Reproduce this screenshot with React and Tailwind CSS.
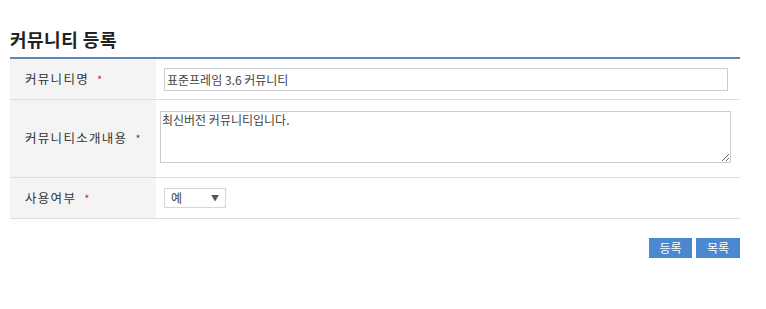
export default function App() {
  const font = { fontFamily: '"Noto Sans CJK KR", "Noto Sans", sans-serif' };
  return (
    <div className="w-[766px] h-[309px] bg-white px-[10px] pt-[25px]" style={font}>
      <h2 className="text-[18px] font-bold text-[#222] leading-[28px] h-[32px] tracking-[0.5px]">커뮤니티 등록</h2>
      <div className="border-t-2 border-[#5f87b0] w-[730px]">
        <div className="flex h-[41px] border-b border-[#dddddd]">
          <div className="w-[146px] bg-[#f4f4f4] flex items-center pl-[15px] text-[12.5px] text-[#333] tracking-[1.3px]">
            커뮤니티명<span className="text-[#b0342c] ml-[8px] text-[11px]">*</span>
          </div>
          <div className="flex-1 flex items-center pl-[8px]">
            <input
              className="w-[564px] h-[23px] border border-[#cccccc] px-[2px] text-[12px] text-[#444] outline-none"
              defaultValue="표준프레임 3.6 커뮤니티"
              style={font}
            />
          </div>
        </div>
        <div className="flex h-[78px] border-b border-[#dddddd]">
          <div className="w-[146px] bg-[#f4f4f4] flex items-center pl-[15px] text-[12.5px] text-[#333] tracking-[1.3px]">
            커뮤니티소개내용<span className="text-[#b0342c] ml-[8px] text-[11px]">*</span>
          </div>
          <div className="flex-1 pl-[4px] pt-[11px]">
            <textarea
              className="block w-[571px] h-[52px] border border-[#cccccc] px-[1px] py-0 text-[12px] text-[#444] outline-none leading-[16px]"
              defaultValue="최신버전 커뮤니티입니다."
              style={font}
            />
          </div>
        </div>
        <div className="flex h-[41px] border-b border-[#dddddd]">
          <div className="w-[146px] bg-[#f4f4f4] flex items-center pl-[15px] text-[12.5px] text-[#333] tracking-[1.3px]">
            사용여부<span className="text-[#b0342c] ml-[8px] text-[11px]">*</span>
          </div>
          <div className="flex-1 flex items-center pl-[8px]">
            <div className="w-[62px] h-[20px] border border-[#d6d6d6] flex items-center justify-between pl-[6px] pr-[6px] text-[12px] text-[#444]">
              <span>예</span>
              <span className="text-[8px] text-[#555]">▼</span>
            </div>
          </div>
        </div>
      </div>
      <div className="flex justify-end gap-[4px] w-[730px] mt-[19px]">
        <button className="w-[43px] h-[20px] bg-[#4a89d0] text-white text-[12px] leading-[20px]" style={font}>등록</button>
        <button className="w-[44px] h-[20px] bg-[#4a89d0] text-white text-[12px] leading-[20px]" style={font}>목록</button>
      </div>
    </div>
  );
}
